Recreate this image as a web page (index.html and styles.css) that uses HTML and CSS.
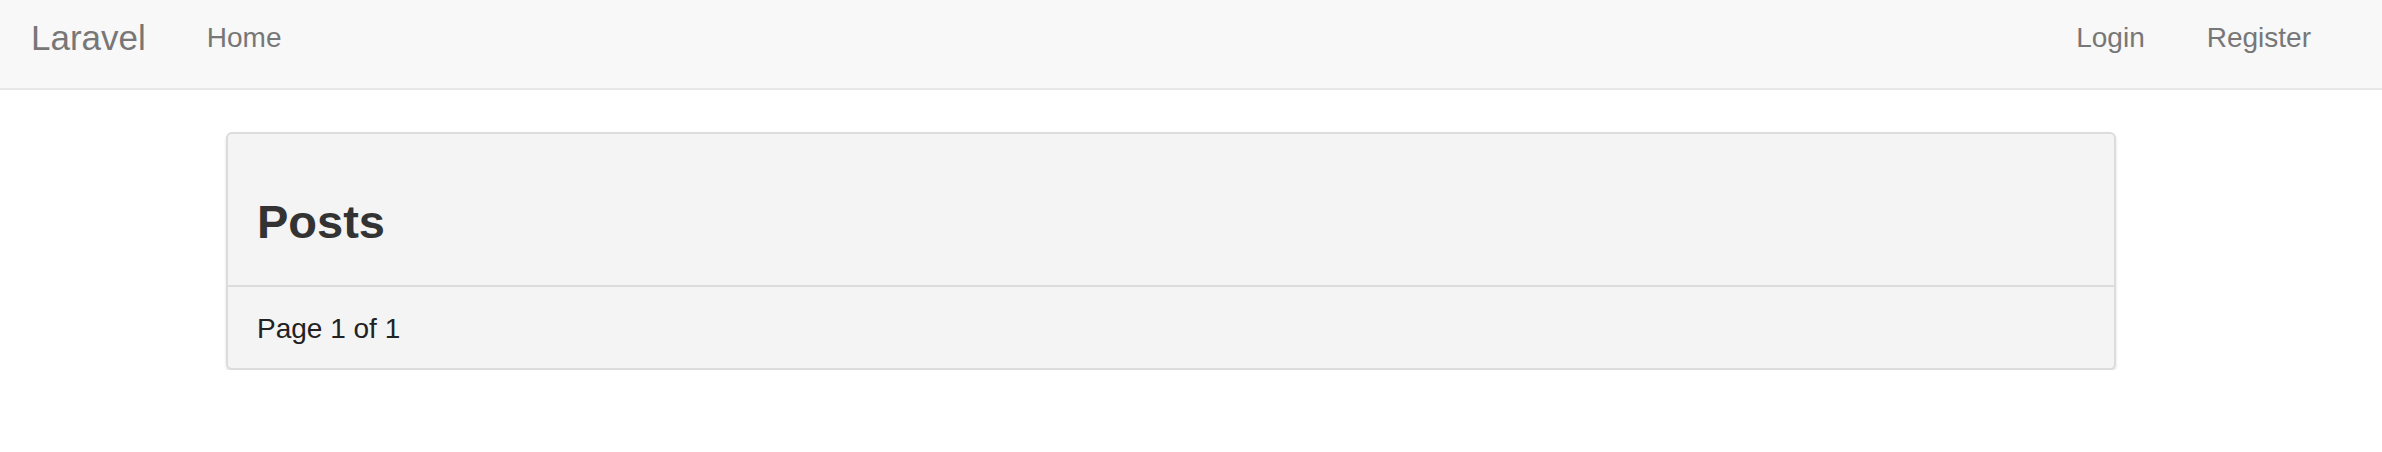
FILE: index.html
```html
<!DOCTYPE html>
<html lang="en">
<head>
    <meta charset="UTF-8">
    <meta name="viewport" content="width=device-width, initial-scale=1.0">
    <title>Laravel</title>
    <link rel="stylesheet" href="styles.css">
</head>
<body>
    <header class="navbar">
        <a href="#" class="navbar-brand">Laravel</a>
        <ul class="nav">
            <li><a href="#">Home</a></li>
        </ul>
        <ul class="nav nav-right">
            <li><a href="#">Login</a></li>
            <li><a href="#">Register</a></li>
        </ul>
    </header>
    <main class="container">
        <div class="panel">
            <div class="panel-heading">
                <h1>Posts</h1>
            </div>
            <div class="panel-body">
                Page 1 of 1
            </div>
        </div>
    </main>
</body>
</html>
```

FILE: styles.css
```css
body {
    margin: 0;
    background-color: #fff;
    font-family: "Liberation Sans", Arial, Helvetica, sans-serif;
    color: #333;
}

.navbar {
    display: flex;
    align-items: flex-start;
    height: 88px;
    background-color: #f8f8f8;
    border-bottom: 2px solid #e7e7e7;
}

.navbar a {
    color: #777;
    text-decoration: none;
}

.navbar-brand {
    font-size: 35px;
    line-height: 40px;
    padding: 18px 30px 0 31px;
}

.nav {
    display: flex;
    list-style: none;
    margin: 0;
    padding: 0;
}

.nav li a {
    display: block;
    font-size: 28px;
    line-height: 32px;
    padding: 22px 31px 0 31px;
}

.nav-right {
    margin-left: auto;
    margin-right: 40px;
}

.container {
    width: 1890px;
    margin: 42px 0 0 226px;
}

.panel {
    background-color: #f4f4f4;
    border: 2px solid #dcdcdc;
    border-radius: 6px;
    box-shadow: 0 2px 3px rgba(0, 0, 0, 0.12);
}

.panel-heading {
    padding: 62px 28px 37px 29px;
    border-bottom: 2px solid #dcdcdc;
}

.panel-heading h1 {
    margin: 0;
    font-size: 47px;
    line-height: 52px;
    font-weight: bold;
    color: #333;
}

.panel-body {
    font-size: 28px;
    line-height: 30px;
    padding: 27px 28px 24px 29px;
    color: #222;
}
```
